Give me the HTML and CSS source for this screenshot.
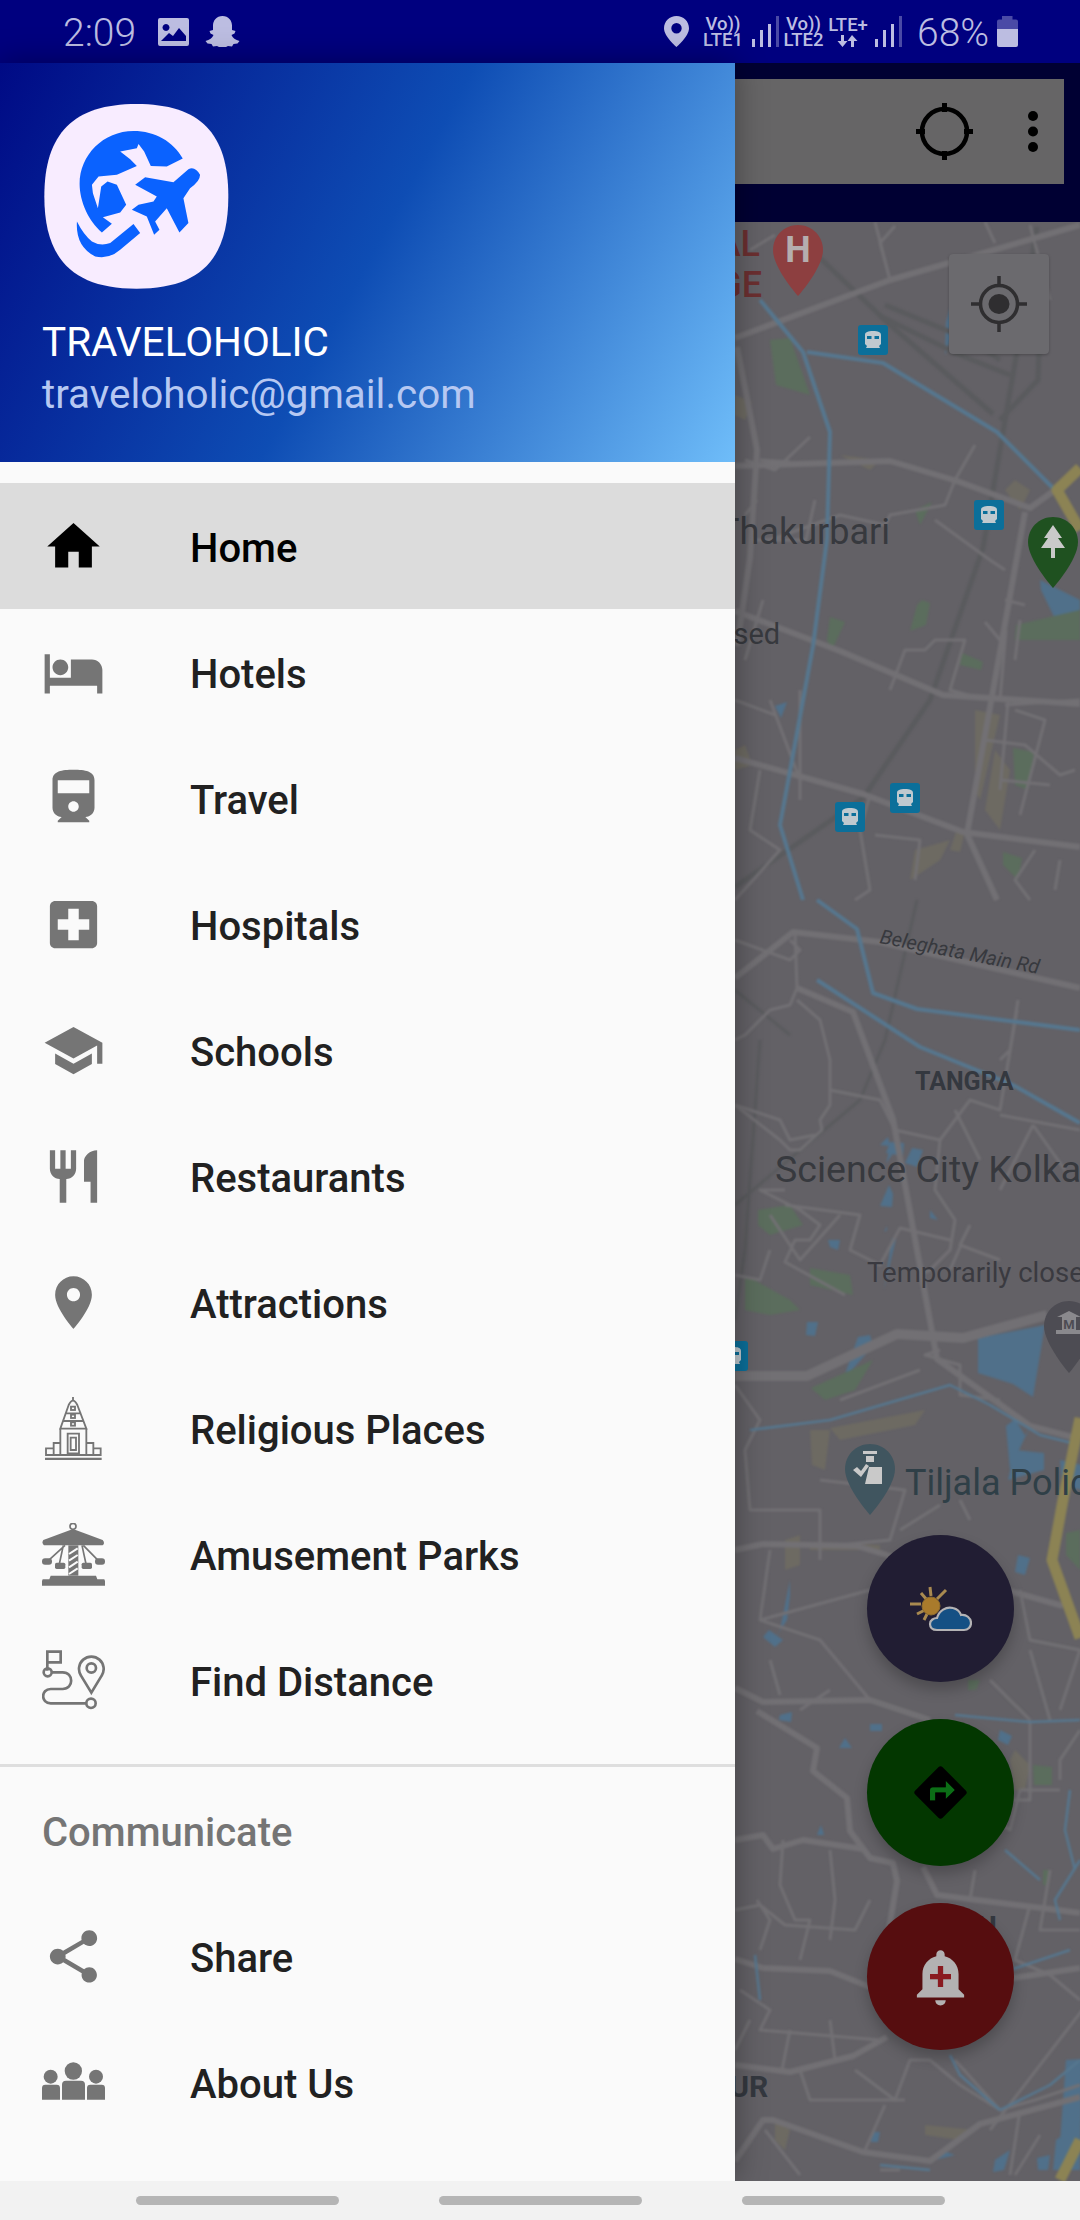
FILE: index.html
```html
<!DOCTYPE html>
<html lang="en">
<head>
<meta charset="utf-8">
<title>Traveloholic</title>
<link rel="stylesheet" href="styles.css">
</head>
<body>
<div class="phone">
  <header class="status">
    <div class="status-left">
      <span class="clock">2:09</span>
      <svg class="st-img" viewBox="0 0 31 28"><path class="st" fill-rule="evenodd" d="M2 0h27a2 2 0 0 1 2 2v24a2 2 0 0 1-2 2H2a2 2 0 0 1-2-2V2a2 2 0 0 1 2-2zM3 23h25v-5l-7-8-6 8-4-3-8 8zM8 6a3.500 3.500 0 1 0 .01 0z"/></svg>
      <svg class="st-ghost" viewBox="0 0 35 31"><path class="st" d="M17.500 0c6 0 9.500 4.500 9.500 9.500v4.500l3.500 1-1 2.500-3 1.500c1 3 4 5 8 6l-2 2.500-4 .5-1.500 2.500-4-.5c-2 1-3.500 2-5.500 2s-3.500-1-5.500-2l-4 .5L6.500 28l-4-.5-2-2.500c4-1 7-3 8-6l-3-1.500-1-2.500 3.500-1V9.500C8 4.500 11.500 0 17.500 0z"/></svg>
    </div>
    <div class="status-right">
      <svg class="st-pin" viewBox="0 0 25 31"><path class="st" fill-rule="evenodd" d="M12.500 0C5.600 0 0 5.400 0 12.200 0 20.500 12.500 31 12.500 31S25 20.500 25 12.200C25 5.400 19.400 0 12.500 0zm0 7a5.200 5.200 0 1 1 0 10.400 5.200 5.200 0 0 1 0-10.400z"/></svg>
      <div class="net net-one"><span>Vo))</span><span>LTE1</span></div>
      <svg class="st-bars" viewBox="0 0 27 31"><rect class="st" x="0" y="23" width="3" height="8"/><rect class="st" x="8" y="14" width="3" height="17"/><rect class="st" x="16" y="8" width="3" height="23"/><rect class="st-dim" x="24" y="0" width="3" height="31"/></svg>
      <div class="net net-two"><span>Vo))</span><span>LTE2</span></div>
      <div class="net net-three"><span>LTE+</span><svg class="st-arrows" viewBox="0 0 22 12"><path class="st" d="M4 0h3v6h3.500L5.500 12 .5 6H4zM15 0l5.500 6H17v6h-3V6h-3.500z"/></svg></div>
      <svg class="st-bars bars-two" viewBox="0 0 27 31"><rect class="st" x="0" y="23" width="3" height="8"/><rect class="st" x="8" y="14" width="3" height="17"/><rect class="st" x="16" y="8" width="3" height="23"/><rect class="st-dim" x="24" y="0" width="3" height="31"/></svg>
      <span class="pct">68%</span>
      <svg class="st-batt" viewBox="0 0 21 31"><path class="st-dim" d="M5 0h10.500v3.500H19a2 2 0 0 1 2 2V13H0V5.500a2 2 0 0 1 2-2h3z"/><path class="st" d="M0 13h21v16a2 2 0 0 1-2 2H2a2 2 0 0 1-2-2z"/></svg>
    </div>
  </header>

  <div class="main">
    <aside class="drawer">
      <section class="head">
        <svg class="logo" viewBox="72 72 554 556">
          <path class="logo-bg" d="M349 72C540 72 625 160 625 350 625 540 540 627 349 627 160 627 72 540 72 350 72 160 160 72 349 72Z"/>
          <path class="logo-fg" d="M488 236C460 185 405 153 340 153 250 153 178 225 178 312 178 365 205 425 245 458L275 432 248 412 300 398 318 375 290 315 262 305 243 320 233 385 218 340 215 315 235 290 290 285 350 258 330 238 300 215 350 205 355 192 372 215 392 258 440 260Z"/>
          <path class="logo-fg" d="M345 315 375 292 460 307 505 268Q525 258 540 285 540 305 510 325L490 355 505 430 478 458 440 385 405 425 418 450 402 465 380 410 335 390 355 375 400 365 410 350Z"/>
          <path class="logo-fg" d="M170 425Q165 500 225 530 265 540 300 510L360 460 340 433 270 490Q240 500 215 485 190 465 170 425Z"/>
        </svg>
        <div class="head-name">TRAVELOHOLIC</div>
        <div class="head-mail">traveloholic@gmail.com</div>
      </section>

      <nav class="menu">
        <a class="item active">
          <svg class="icon" viewBox="0 0 24 24"><path d="M10 20v-6h4v6h5v-8h3L12 3 2 12h3v8z"/></svg>
          <span>Home</span>
        </a>
        <a class="item">
          <svg class="icon" viewBox="0 0 24 24"><path d="M7 13c1.660 0 3-1.340 3-3S8.660 7 7 7s-3 1.340-3 3 1.340 3 3 3zm12-6h-8v7H3V5H1v15h2v-3h18v3h2v-9c0-2.210-1.790-4-4-4z"/></svg>
          <span>Hotels</span>
        </a>
        <a class="item">
          <svg class="icon" viewBox="0 0 24 24"><path d="M4 15.500C4 17.430 5.570 19 7.500 19L6 20.500v.5h12v-.5L16.500 19c1.930 0 3.500-1.570 3.500-3.500V5c0-3.500-3.580-4-8-4s-8 .5-8 4v10.500zm8 1.500c-1.100 0-2-.9-2-2s.9-2 2-2 2 .9 2 2-.9 2-2 2zm6-7H6V5h12v5z"/></svg>
          <span>Travel</span>
        </a>
        <a class="item">
          <svg class="icon" viewBox="0 0 24 24"><path d="M19 3H5c-1.100 0-1.990.9-1.990 2L3 19c0 1.100.9 2 2 2h14c1.100 0 2-.9 2-2V5c0-1.100-.9-2-2-2zm-1 11h-4v4h-4v-4H6v-4h4V6h4v4h4v4z"/></svg>
          <span>Hospitals</span>
        </a>
        <a class="item">
          <svg class="icon" viewBox="0 0 24 24"><path d="M5 13.180v4L12 21l7-3.820v-4L12 17l-7-3.820zM12 3L1 9l11 6 9-4.910V17h2V9L12 3z"/></svg>
          <span>Schools</span>
        </a>
        <a class="item">
          <svg class="icon" viewBox="0 0 24 24"><path d="M11 9H9V2H7v7H5V2H3v7c0 2.120 1.660 3.840 3.750 3.970V22h2.500v-9.030C11.340 12.840 13 11.120 13 9V2h-2v7zm5-3v8h2.500v8H21V2c-2.760 0-5 2.240-5 4z"/></svg>
          <span>Restaurants</span>
        </a>
        <a class="item">
          <svg class="icon" viewBox="0 0 24 24"><path d="M12 2C8.130 2 5 5.130 5 9c0 5.250 7 13 7 13s7-7.750 7-13c0-3.870-3.130-7-7-7zm0 9.500c-1.380 0-2.500-1.120-2.500-2.500s1.120-2.500 2.500-2.500 2.500 1.120 2.500 2.500-1.120 2.500-2.500 2.500z"/></svg>
          <span>Attractions</span>
        </a>
        <a class="item">
          <svg class="icon line" viewBox="66 48 189 189">
            <path d="M121 143 146 72Q159 46 172 72L199 143ZM135 97H184M127 120H192M159 48V58"/>
            <rect x="153" y="77" width="12" height="10"/><rect x="153" y="101" width="12" height="10"/><rect x="153" y="124" width="12" height="10"/>
            <path d="M121 143V222H199V143M143 158H177V217H143ZM152 170H168V207H152ZM121 186H101V222H121M199 186H220V222H199M101 202H78V222H101M220 202H242V222H220"/>
            <path class="thick" d="M75 234H245"/>
          </svg>
          <span>Religious Places</span>
        </a>
        <a class="item">
          <svg class="icon" viewBox="66 427 189 189">
            <circle class="ring" cx="159" cy="437" r="9"/>
            <path d="M159 445 248 478Q256 488 248 494L72 494Q64 488 70 478Z"/>
            <path d="M145 494H175V585H145Z"/>
            <path class="hatch" d="M147 520 173 503M147 540 173 523M147 560 173 543M147 580 173 563"/>
            <path class="arm" d="M135 494 85 540M130 494 118 550M186 494 198 550M190 494 235 540"/>
            <rect x="66" y="533" width="30" height="19" rx="9"/><rect x="105" y="546" width="31" height="19" rx="5"/><rect x="185" y="546" width="31" height="19" rx="5"/><rect x="225" y="533" width="30" height="19" rx="9"/>
            <path d="M92 585H228L232 596H252Q256 596 255 615H66Q65 596 69 596H88Z"/>
          </svg>
          <span>Amusement Parks</span>
        </a>
        <a class="item">
          <svg class="icon line wide" viewBox="66 805 189 189">
            <path d="M82 870V813H122V845H84"/>
            <circle cx="83" cy="875" r="12"/>
            <path d="M96 875H128C162 875 162 925 128 925H92C62 925 62 968 92 968H199"/>
            <circle cx="213" cy="968" r="14"/>
            <path d="M214 936 183 885A37 37 0 1 1 245 885Z"/>
            <circle cx="214" cy="862" r="14"/>
          </svg>
          <span>Find Distance</span>
        </a>
      </nav>

      <div class="divider"></div>
      <div class="subhead">Communicate</div>

      <nav class="menu">
        <a class="item">
          <svg class="icon" viewBox="0 0 24 24"><path d="M18 16.080c-.76 0-1.440.3-1.960.77L8.910 12.700c.05-.23.09-.46.09-.7s-.04-.47-.09-.7l7.050-4.110c.54.5 1.250.81 2.040.81 1.660 0 3-1.340 3-3s-1.340-3-3-3-3 1.340-3 3c0 .24.04.47.09.7L8.040 9.810C7.500 9.310 6.790 9 6 9c-1.660 0-3 1.340-3 3s1.340 3 3 3c.79 0 1.500-.31 2.040-.81l7.120 4.160c-.05.21-.08.43-.08.65 0 1.610 1.310 2.920 2.920 2.920 1.610 0 2.920-1.310 2.920-2.920s-1.310-2.920-2.920-2.920z"/></svg>
          <span>Share</span>
        </a>
        <a class="item">
          <svg class="icon" viewBox="126 934 189 189">
            <circle cx="220" cy="994" r="26"/><circle cx="152" cy="1011" r="21"/><circle cx="288" cy="1011" r="21"/>
            <path d="M186 1080V1035Q186 1023 198 1023H243Q255 1023 255 1035V1080ZM126 1080V1045Q126 1035 136 1035H170Q180 1035 180 1045V1080ZM261 1080V1045Q261 1035 271 1035H305Q315 1035 315 1045V1080Z"/>
          </svg>
          <span>About Us</span>
        </a>
      </nav>
    </aside>

    <div class="side">
      <div class="appbar">
        <div class="search">
          <svg class="target" viewBox="0 0 57 57"><circle class="tg-ring" cx="28.500" cy="28.500" r="22.500"/><path class="tg-tick" d="M28.500 0V9M28.500 48V57M0 28.500H9M48 28.500H57"/></svg>
          <svg class="more" viewBox="0 0 10 41"><circle cx="5" cy="5" r="5"/><circle cx="5" cy="20.500" r="5"/><circle cx="5" cy="36" r="5"/></svg>
        </div>
      </div>
      <div class="map">
        <svg class="map-canvas" viewBox="735 222 345 1959">
          <g class="soft">
          <g class="water">
            <path d="M978 1338 1045 1325 1033 1397 1013 1384 978 1373Z"/>
            <path d="M843 1380 858 1337 870 1335 873 1346 843 1380Z"/>
            <path d="M1006 1426 1015 1419 1026 1437 1030 1426 1010 1470Z"/>
            <path d="M946 322 951 305 955 290 962 306 945 355Z"/>
            <path d="M1015 1450 1044 1453 1044 1470 1008 1480Z"/>
            <path d="M890 1142 904 1143 903 1156 886 1153ZM912 1148 923 1150 917 1167 905 1163ZM880 1145 888 1137 890 1146ZM886 1164 891 1143 897 1147Z"/>
            <path d="M880 1206 889 1185 893 1194 892 1207ZM884 1232 887 1226 887 1230ZM884 1290 892 1238 896 1239 892 1255ZM807 1322 818 1322 815 1336 806 1335ZM828 1240 840 1240 838 1250 830 1247ZM930 1218 938 1220 930 1210Z"/>
            <path d="M775 706 787 702 781 718ZM790 1580 780 1630 774 1640 787 1620 790 1595Z"/>
            <path d="M769 1630 783 1640 775 1647 763 1637ZM780 1715 792 1712 791 1722 779 1720ZM870 1724 882 1724 882 1731 870 1731ZM845 1738 852 1748 839 1748Z"/>
            <path d="M1000 1730 1012 1736 1008 1745 998 1740ZM817 1835 821 1825 824 1835ZM1066 2060 1082 2059 1080 2170 1058 2170ZM995 2160 1010 2150 1004 2170 993 2172ZM872 2132 880 2132 878 2142 871 2142ZM940 2150 955 2155 935 2160Z"/>
            <path d="M1037 2158 1050 2155 1048 2170 1038 2170ZM1056 2140 1070 2130 1066 2170 1053 2170Z"/>
            <path d="M1018 1555 1030 1558 1025 1575 1015 1572ZM1060 1460 1082 1465 1082 1490 1062 1485Z"/>
            <path d="M1040 580 1080 600 1080 640 1063 635 1041 590Z"/>
          </g>
          <g class="green">
            <path d="M770 340 790 338 810 395 776 385Z"/>
            <path d="M915 510 932 502 920 525ZM922 600 930 603 926 625 910 631 917 605Z"/>
            <path d="M1016 625 1080 610 1080 640 1015 640Z"/>
            <path d="M830 617 845 622 832 650 827 640Z"/>
            <path d="M962 653 983 662 981 670 960 665Z"/>
            <path d="M1013 748 1034 752 1028 790 1015 785Z"/>
            <path d="M1003 852 1022 858 1018 880 1003 865Z"/>
            <path d="M758 1210 790 1205 803 1225 770 1235 758 1225ZM810 1268 850 1275 853 1295 810 1285ZM745 1275 790 1300 800 1310 770 1315 745 1310ZM811 1388 873 1360 855 1390 825 1400Z"/>
            <path d="M1066 1533 1080 1530 1080 1570 1066 1555ZM968 1680 980 1680 976 1690 968 1690ZM1033 1765 1052 1767 1052 1785 1034 1785ZM1043 1870 1050 1870 1048 1885 1043 1885Z"/>
          </g>
          <g class="tan">
            <path d="M956 832 964 835 960 852 950 850ZM975 710 1000 715 980 800 975 790ZM995 750 1010 770 1000 830 985 810ZM940 860 950 840 915 850 910 880ZM1015 480 1030 490 1020 510 1005 490Z"/>
            <path d="M735 395 752 402 745 420 735 415ZM840 455 880 460 870 470ZM735 750 745 745 752 765 735 770Z"/>
            <path d="M810 1430 830 1430 825 1470 812 1465ZM830 1428 925 1410 915 1425 840 1440ZM785 1570 800 1565 800 1535 785 1540ZM810 1542 880 1545 880 1550 810 1550ZM1010 1760 1015 1750 1030 1765 1025 1790 1015 1790ZM775 2120 790 2130 785 2150 775 2140ZM925 2125 975 2130 960 2140 925 2135Z"/>
          </g>
          <g class="rail">
            <path d="M820 258 890 325 993 414"/>
            <path d="M1037 227 1020 334 983 548 930 700 863 798 735 887"/>
            <path d="M880 316 960 355 1010 375M885 305 970 340 1000 360M1005 295 1040 320 1038 380 1000 420"/>
            <path class="rail-thin" d="M735 990 790 1035M917 900 885 1040 860 1100 735 1205M760 1040 745 1250 735 1320"/>
          </g>
          <g class="road">
            <path d="M735 338 890 280 1080 225"/>
            <path d="M735 466 890 461 957 481 1030 508 1055 490"/>
            <path d="M1025 512 993 691 967 834 997 900"/>
            <path d="M735 611 840 651 943 695 1080 704"/>
            <path d="M735 758 863 794 963 832 1080 847"/>
            <path d="M737 347 757 450 750 557 737 646"/>
            <path d="M735 978 793 932 880 942 1080 988"/>
            <path d="M797 988 853 1012 893 1119 937 1359 1030 1426 1080 1439"/>
            <path class="wide" d="M735 1376 807 1376 897 1334 963 1338 1047 1315"/>
            <path d="M735 1550 763 1544 857 1546 887 1555 1013 1592 1063 1606"/>
            <path d="M735 1688 763 1702 870 1700 930 1720"/>
            <path d="M757 1711 817 1748 813 1771 847 1798 850 1831 870 1858 893 1863 897 1881 887 1941"/>
            <path d="M735 1840 763 1835 773 1849 803 1840 863 1849"/>
            <path d="M735 1959 763 1968 830 1971 870 1987 1013 1978 1080 1968"/>
            <path d="M735 2065 790 2072 853 2056 887 2037"/>
            <path d="M735 2161 763 2120 773 2120 863 2152 930 2161 980 2124 1080 2097"/>
            <path d="M923 1867 937 1895 1050 1909 1080 1913"/>
          </g>
          <g class="road thin">
            <path d="M750 250 775 235M875 222 881 245 890 280 880 243 895 226M985 222 995 243M1030 225 1050 300"/>
            <path d="M763 600 745 660M790 462 760 460M810 437 775 470 745 460M757 500 745 515M815 500 806 540 750 540"/>
            <path d="M975 445 955 480 945 505 890 515 885 525 840 515 770 540M935 520 990 560 1005 570"/>
            <path d="M985 622 1000 640M1005 600 1025 605M1020 620 1015 660M1006 630 1000 700M975 697 950 690 965 640 935 640 925 650 905 650 890 690"/>
            <path d="M735 700 775 715M770 700 800 780M800 690 800 800M760 770 750 830 780 850 735 900"/>
            <path d="M1008 702 1000 790M1005 705 1080 700M1015 710 1045 720 1020 815M985 740 1025 745 1060 775 1075 770M1000 780 1050 785"/>
            <path d="M870 795 860 830 870 890 855 900M875 835 920 840 915 880M1035 850 1015 880 1030 900M1060 860 1055 890"/>
            <path d="M735 940 790 960 800 950 790 940M795 932 797 988 790 1005 770 1010 745 1035 735 1040M797 1000 820 1020 825 1040 830 1060 830 1105 820 1120 822 1130 800 1150 790 1150 780 1140 735 1105"/>
            <path d="M830 1090 880 1100 895 1130 940 1140 970 1100 1000 1110 1017 1010 M940 1140 935 1190 955 1220 950 1250 930 1270 920 1275M955 1110 980 1160M1018 1000 1010 1050 1000 1060M1000 1115 1080 1130 M1033 1125 1000 1190M1033 1125 1065 1170"/>
            <path d="M735 1105 780 1120 790 1140 815 1135M785 1190 760 1190 800 1210 820 1225 810 1240 795 1240 785 1262 845 1295M785 1205 860 1215 850 1250 880 1265 900 1228 950 1240M840 1215 800 1260 770 1215M770 1250 760 1280 735 1275"/>
            <path d="M1000 1260 960 1245 970 1225 M961 1245 950 1270M940 1350 925 1355 960 1365 960 1395 1000 1400M920 1370 840 1400"/>
            <path d="M735 1385 760 1420 745 1450 750 1510 820 1510 820 1560M820 1480 905 1490 890 1540 840 1545M960 1500 970 1520M940 1505 900 1530"/>
            <path d="M770 1550 760 1620 820 1640 870 1700M760 1620 870 1590 880 1640M905 1555 880 1620 940 1640M1020 1590 1030 1640 1080 1650 1060 1710M1030 1650 1050 1720"/>
            <path d="M780 1695 770 1660M800 1710 830 1690M990 1680 1030 1720M1030 1720 1030 1800 1010 1800M1080 1730 1060 1760 1060 1780M1060 1790 1020 1790 1010 1830 980 1810 940 1820"/>
            <path d="M783 1840 780 1885 795 1920 810 1920 800 1960M757 1900 770 1920 760 1950M830 1850 835 1900 830 1940M735 1910 760 1905 785 1925 855 1930 870 1900"/>
            <path d="M975 1870 970 1900M1050 1870 1040 1930 1080 1930M1030 1905 1015 1960 1050 1975 1080 2000"/>
            <path d="M740 1990 770 2010 760 2030 880 2040M750 2020 735 2050M790 2030 782 2070M830 2020 835 2060M855 2070 895 2100 910 2060 930 2060 960 2085 1000 2110 1035 2100 1080 2085"/>
            <path d="M800 2070 810 2100 905 2100M885 2105 865 2150M955 2060 1000 2110M1020 2110 1010 2175M1090 2000 990 2130M1040 2135 1015 2175 M765 2130 800 2175M880 2170 900 2170"/>
          </g>
          <g class="river">
            <path d="M760 300 803 352 830 432 827 539 813 646 790 771 780 825 803 900"/>
            <path d="M807 352 883 363 997 432 1055 490"/>
            <path d="M817 900 857 929 873 993 917 1009 1080 1030"/>
            <path d="M817 980 920 1047 1013 1085 1080 1123"/>
            <path class="river-thin" d="M750 1430 830 1420 950 1385 990 1405 1040 1435 1080 1445"/>
            <path class="river-thin" d="M955 1715 1030 1722 1080 1720M1070 1790 1065 1830 1075 1870M1005 1850 1040 1880M1080 1860 1055 1900 1060 1920M1010 1970 1070 1950 M950 2055 960 2075 1000 2110M1000 2110 1050 2085 1080 2060M880 2165 930 2170M755 1955 760 2000"/>
          </g>
          <g class="hw">
            <path d="M1080 468 1057 490 1080 530"/>
            <path d="M1080 1418 1063 1500 1052 1560 1080 1638"/>
            <path d="M1080 2140 1060 2180"/>
          </g>
          </g>

          <path class="m-red" d="M798 225C784 225 773 236 773 250 773 268 798 296 798 296S823 268 823 250C823 236 812 225 798 225Z"/>
          <text class="m-pin-h" x="798" y="262" text-anchor="middle">H</text>
          <text class="m-redtxt" x="760" y="256" text-anchor="end">AL</text>
          <text class="m-redtxt" x="762" y="297" text-anchor="end">GE</text>

          <path class="m-green" d="M1053 517C1039 517 1028 528 1028 542 1028 560 1053 588 1053 588S1078 560 1078 542C1078 528 1067 517 1053 517Z"/>
          <path class="m-tree" d="M1053 525 1062 538H1058L1065 548H1055V558H1051V548H1041L1048 538H1044Z"/>

          <path class="m-police" d="M870 1444C856 1444 845 1455 845 1469 845 1487 870 1515 870 1515S895 1487 895 1469C895 1455 884 1444 870 1444Z"/>
          <path class="m-tree" d="M863 1451H877V1454H863ZM866 1456H874V1462H866ZM853 1470 857 1467 861 1471 866 1464 869 1466 861 1477ZM869 1467H882V1484H865Z"/>
          <path class="m-museum" d="M1069 1301C1055 1301 1044 1312 1044 1326 1044 1344 1069 1373 1069 1373S1094 1344 1094 1326C1094 1312 1083 1301 1069 1301Z"/>
          <path class="m-mus" d="M1057 1317 1069 1311 1081 1317H1076V1330H1082V1334H1056V1330H1062V1317Z"/>
          <text class="m-mus-t" x="1069" y="1329" text-anchor="middle">M</text>

          <g class="m-tile" transform="translate(858 325)"><rect width="30" height="30" rx="3"/><path class="m-tile-ic" d="M15 6c-5 0-8 1-8 4v9l2 2-1 2h14l-1-2 2-2v-9c0-3-3-4-8-4zM9 11h4.500v3H9zm7.500 0H21v3h-4.500z"/></g>
          <g class="m-tile" transform="translate(974 500)"><rect width="30" height="30" rx="3"/><path class="m-tile-ic" d="M15 6c-5 0-8 1-8 4v9l2 2-1 2h14l-1-2 2-2v-9c0-3-3-4-8-4zM9 11h4.500v3H9zm7.500 0H21v3h-4.500z"/></g>
          <g class="m-tile" transform="translate(890 783)"><rect width="30" height="30" rx="3"/><path class="m-tile-ic" d="M15 6c-5 0-8 1-8 4v9l2 2-1 2h14l-1-2 2-2v-9c0-3-3-4-8-4zM9 11h4.500v3H9zm7.500 0H21v3h-4.500z"/></g>
          <g class="m-tile" transform="translate(835 802)"><rect width="30" height="30" rx="3"/><path class="m-tile-ic" d="M15 6c-5 0-8 1-8 4v9l2 2-1 2h14l-1-2 2-2v-9c0-3-3-4-8-4zM9 11h4.500v3H9zm7.500 0H21v3h-4.500z"/></g>
          <g class="m-tile" transform="translate(718 1341)"><rect width="30" height="30" rx="3"/><path class="m-tile-ic" d="M15 6c-5 0-8 1-8 4v9l2 2-1 2h14l-1-2 2-2v-9c0-3-3-4-8-4zM9 11h4.500v3H9zm7.500 0H21v3h-4.500z"/></g>

          <text class="m-lg" x="718" y="544">Thakurbari</text>
          <text class="m-md" x="691" y="644">Closed</text>
          <text class="m-road" transform="translate(879 943) rotate(11)">Beleghata Main Rd</text>
          <text class="m-bold" x="915" y="1090">TANGRA</text>
          <text class="m-lg m-big" x="775" y="1182">Science City Kolkata</text>
          <text class="m-md2" x="867" y="1282">Temporarily closed</text>
          <text class="m-lg m-teal" x="905" y="1495">Tiljala Police</text>
          <text class="m-bold big" x="710" y="2097">PUR</text>
          <text class="m-bold big" x="977" y="1937">U</text>
        </svg>

        <div class="locate">
          <svg class="locate-ic" viewBox="0 0 56 56"><circle class="lc-ring" cx="28" cy="28" r="18.500"/><ellipse class="lc-dot" cx="28" cy="28" rx="10.500" ry="10"/><path class="lc-tick" d="M28 0V9M28 47V56M0 28H9M47 28H56"/></svg>
        </div>

        <div class="fabs">
          <div class="fab fab-weather">
            <svg class="fab-ic" viewBox="0 0 63 63">
              <path class="wx-ray" d="M1 27H12M12 16 18 23M21 10 22 19M37 13 28 22M8 37 16 33M15 43 18 37"/>
              <circle class="wx-sun" cx="22" cy="29" r="9"/>
              <path class="wx-cloud" d="M28 53C23 53 21 50 21 47 21 43 25 41 28 41 30 34 37 29 44 31 48 32 51 35 52 38 57 37 62 41 62 46 62 50 59 53 55 53Z"/>
            </svg>
          </div>
          <div class="fab fab-route">
            <svg class="fab-ic" viewBox="0 0 24 24">
              <path class="rt-arrow" d="M14 14.500V12h-4v3H8v-4c0-.55.45-1 1-1h5V7.500l3.500 3.500-3.500 3.500z"/>
              <path class="rt-shape" fill-rule="evenodd" d="M21.710 11.290l-9-9c-.39-.39-1.020-.39-1.410 0l-9 9c-.39.39-.39 1.020 0 1.410l9 9c.39.39 1.020.39 1.410 0l9-9c.39-.38.39-1.010 0-1.410zM14 14.500V12h-4v3H8v-4c0-.55.45-1 1-1h5V7.500l3.500 3.500-3.500 3.500z"/>
            </svg>
          </div>
          <div class="fab fab-alert">
            <svg class="fab-ic" viewBox="0 0 24 24">
              <path class="al-plus" d="M16 13.010h-3v3h-2v-3H8V11h3V8h2v3h3v2.010z"/>
              <path class="al-bell" fill-rule="evenodd" d="M10.010 21.010c0 1.100.89 1.990 1.990 1.990s1.990-.89 1.990-1.990h-3.980zm8.870-4.190V11c0-3.250-2.250-5.970-5.290-6.690v-.72C13.590 2.710 12.880 2 12 2s-1.590.71-1.590 1.590v.72C7.370 5.030 5.120 7.750 5.120 11v5.820L3 18.940V20h18v-1.060l-2.120-2.120zM16 13.010h-3v3h-2v-3H8V11h3V8h2v3h3v2.010z"/>
            </svg>
          </div>
        </div>
      </div>
    </div>
  </div>

  <footer class="navbar">
    <span class="pill"></span>
    <span class="pill"></span>
    <span class="pill"></span>
  </footer>
</div>
</body>
</html>
```

FILE: styles.css
```css
* { box-sizing: border-box; }
html, body { margin: 0; padding: 0; }
body { font-family: Roboto, "Liberation Sans", sans-serif; background: #f2f2f2; }

.phone { width: 1080px; height: 2220px; display: flex; flex-direction: column; overflow: hidden; }

/* status bar */
.status { height: 63px; background: #00007f; color: #bcbde1; display: flex; align-items: center; justify-content: space-between; padding: 0 62px 0 63px; }
.status-left, .status-right { display: flex; align-items: center; }
.clock { font-size: 39px; font-weight: 300; line-height: 63px; width: 95px; padding-top: 3px; }
.st { fill: #bcbde1; }
.st-dim { fill: #4a4aa6; }
.st-img { width: 31px; height: 28px; margin-right: 16px; }
.st-ghost { width: 35px; height: 31px; }
.st-pin { width: 25px; height: 31px; margin-right: 15px; }
.net { display: flex; flex-direction: column; font-size: 18.500px; font-weight: 500; line-height: 16px; align-items: center; }
.net-one { width: 38px; margin-right: 10px; }
.net-two { width: 39px; margin: 0 6px 0 5px; }
.net-three { width: 38px; }
.st-bars { width: 27px; height: 31px; }
.bars-two { margin-left: 8px; }
.st-arrows { width: 22px; height: 12px; margin-top: 2px; }
.pct { font-size: 39px; font-weight: 300; line-height: 63px; margin: 0 10px 0 15px; width: 70px; padding-top: 3px; }
.st-batt { width: 21px; height: 31px; }

/* main split */
.main { flex: 1; display: flex; min-height: 0; }
.drawer { width: 735px; flex: none; background: #fafafa; box-shadow: 0 0 30px rgba(0, 0, 0, .35); position: relative; z-index: 2; }

.head { height: 399px; padding: 41px 0 0 42px; background: linear-gradient(118.500deg, #000a85 0%, #0e4db4 50%, #6fbdf9 100%); }
.logo { display: block; width: 185px; height: 185px; margin: 0 0 0 2px; }
.logo-bg { fill: #f8ecff; }
.logo-fg { fill: #0a62ff; }
.head-name { margin-top: 28px; font-size: 40.500px; line-height: 50px; color: #fff; }
.head-mail { margin-top: 3px; font-size: 40.400px; line-height: 50px; color: #b6c8f2; }

.menu { display: flex; flex-direction: column; }
.head + .menu { margin-top: 21px; }
.item { height: 126px; display: flex; align-items: center; gap: 85px; padding-left: 42px; font-size: 40px; font-weight: 500; color: #212121; }
.item span { padding-top: 5px; }
.item.active { background: #dcdcdc; color: #000; }
.icon { width: 63px; height: 63px; flex: none; fill: #757575; }
.item.active .icon { fill: #000; }
.icon.line { fill: none; }
.icon.line * { stroke: #757575; stroke-width: 5.500; fill: none; }
.icon.line .thick { stroke-width: 7; }
.icon.wide * { stroke-width: 8; }
.ring { fill: none; stroke: #757575; stroke-width: 5; }
.hatch { fill: none; stroke: #fafafa; stroke-width: 6; }
.arm { fill: none; stroke: #757575; stroke-width: 5; }

.divider { height: 3px; margin-top: 21px; background: #dedede; }
.subhead { height: 126px; padding: 5px 0 0 42px; display: flex; align-items: center; font-size: 40px; font-weight: 500; color: #757575; }

/* right side */
.side { flex: 1; display: flex; flex-direction: column; min-width: 0; }
.appbar { height: 159px; padding: 16px 16px 38px 0; background: #000033; }
.search { height: 105px; background: #666566; display: flex; align-items: center; justify-content: flex-end; padding-right: 26px; }
.target { width: 57px; height: 57px; margin-right: 55px; }
.tg-ring { fill: none; stroke: #000; stroke-width: 4.500; }
.tg-tick { stroke: #000; stroke-width: 5; fill: none; }
.more { width: 10px; height: 41px; fill: #000; }

.map { flex: 1; position: relative; overflow: hidden; background: #636166; min-height: 0; }
.map-canvas { display: block; width: 345px; height: 1959px; }
.soft { filter: blur(.8px); }

.water path { fill: #50708a; stroke: none; }
.green path { fill: #5b6d5d; stroke: none; }
.tan path { fill: #6d6a62; stroke: none; }
.rail path { fill: none; stroke: #5a5b5e; stroke-width: 5; }
.rail .rail-thin { stroke-width: 3; }
.road path { fill: none; stroke: #727074; stroke-width: 6; stroke-linejoin: round; }
.road .wide { stroke-width: 10; }
.road.thin path { stroke-width: 3; }
.river path { fill: none; stroke: #56778f; stroke-width: 4; stroke-linejoin: round; }
.river .river-thin { stroke-width: 2.500; }
.hw path { fill: none; stroke: #8c8354; stroke-width: 11; stroke-linejoin: round; }

.m-red { fill: #8d3f40; }
.m-pin-h { font-size: 36px; font-weight: 700; fill: #b5aeae; }
.m-redtxt { font-size: 36px; font-weight: 500; fill: #6b2f30; }
.m-green { fill: #1f5120; }
.m-tree { fill: #c9c9c9; }
.m-police { fill: #40555f; }
.m-museum { fill: #4d4c53; }
.m-mus { fill: #8a898d; }
.m-mus-t { font-size: 13px; font-weight: 700; fill: #4d4c53; }
.m-tile rect { fill: #0b6f9a; }
.m-tile-ic { fill: #bfc9cf; }
.m-lg { font-size: 36px; fill: #37393e; }
.m-big { font-size: 37.500px; }
.m-teal { fill: #2f3f47; }
.m-md { font-size: 29px; fill: #37393e; }
.m-md2 { font-size: 27.500px; fill: #3a3a40; }
.m-road { font-size: 20px; font-style: italic; fill: #37393e; }
.m-bold { font-size: 25px; font-weight: 700; fill: #34383f; }
.m-bold.big { font-size: 30px; }

.locate { position: absolute; left: 214px; top: 32px; width: 100px; height: 100px; border-radius: 4px; background: #6b6a6e; box-shadow: 0 1px 3px rgba(0, 0, 0, .25); display: flex; align-items: center; justify-content: center; }
.locate-ic { width: 56px; height: 56px; }
.lc-ring { fill: none; stroke: #2f2e30; stroke-width: 3.500; }
.lc-dot { fill: #2f2e30; }
.lc-tick { stroke: #2f2e30; stroke-width: 3.500; fill: none; }

.fabs { position: absolute; right: 66px; bottom: 131px; display: flex; flex-direction: column; gap: 37px; }
.fab { width: 147px; height: 147px; border-radius: 50%; display: flex; align-items: center; justify-content: center; box-shadow: 0 8px 14px rgba(0, 0, 0, .22); }
.fab-weather { background: #211d33; }
.fab-route { background: #033700; }
.fab-alert { background: #560d0f; }
.fab-ic { width: 63px; height: 63px; }
.wx-ray { fill: none; stroke: #a98a50; stroke-width: 3; }
.wx-sun { fill: #a97b2c; stroke: #8f6d2e; stroke-width: 1; }
.wx-cloud { fill: #155084; stroke: #b4b3b5; stroke-width: 2.200; }
.rt-arrow { fill: #0b6e16; }
.rt-shape { fill: #000; }
.al-plus { fill: #8a1a20; }
.al-bell { fill: #b3b1b2; }

/* nav bar */
.navbar { height: 39px; background: #f2f2f2; display: flex; align-items: center; padding: 0 135px 0 136px; justify-content: space-between; position: relative; z-index: 3; }
.pill { width: 203px; height: 9px; border-radius: 5px; background: #b5b5b5; }
```
